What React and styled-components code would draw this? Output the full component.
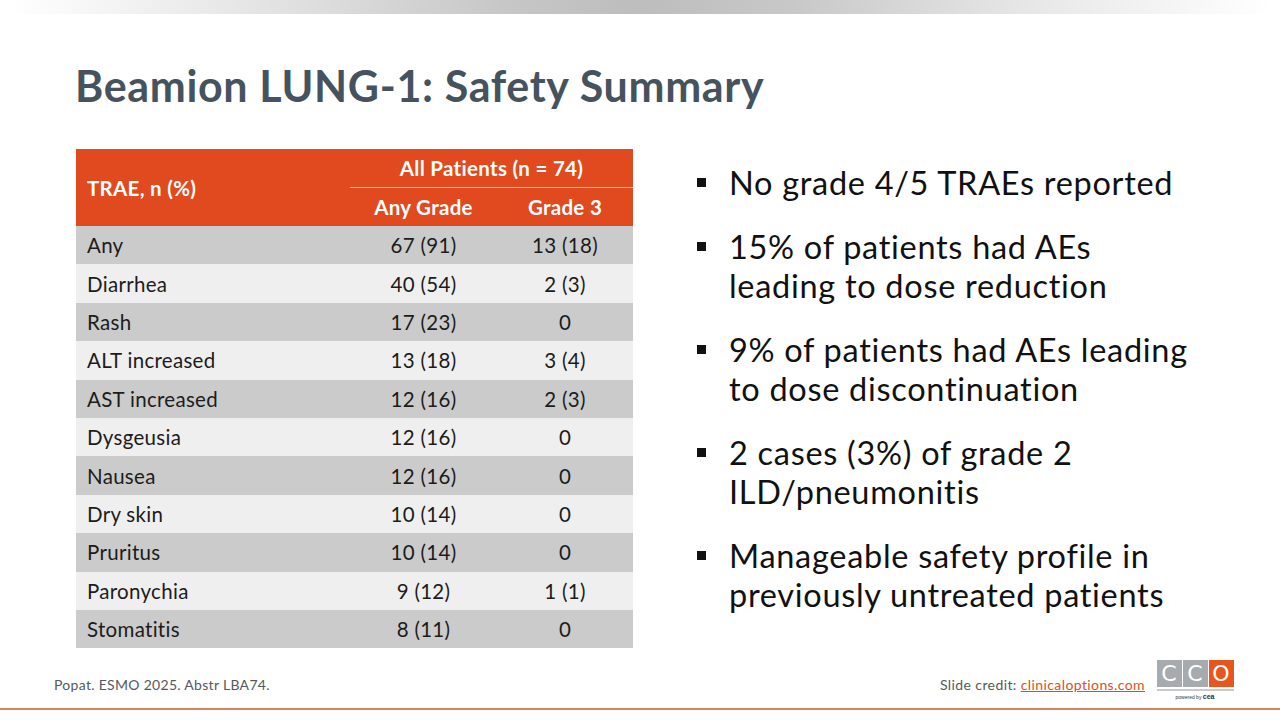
import React from "react";
import styled, { createGlobalStyle } from "styled-components";

const GlobalStyle = createGlobalStyle`
  html, body {
    margin: 0;
    padding: 0;
    background: #ffffff;
  }
  body {
    font-family: Lato, "Open Sans", sans-serif;
  }
`;

const Slide = styled.div`
  width: 1280px;
  height: 720px;
  background: #ffffff;
  display: flex;
  flex-direction: column;
  overflow: hidden;
`;

const TopBar = styled.div`
  height: 14px;
  margin: 0 8px;
  background: linear-gradient(
    90deg,
    #ffffff 0%,
    #e4e4e4 20%,
    #c6c6c6 40%,
    #bdbdbd 50%,
    #c8c8c8 62%,
    #e6e6e6 80%,
    #ffffff 100%
  );
`;

const Title = styled.h1`
  margin: 44px 0 0 75px;
  font-family: Lato, sans-serif;
  font-weight: 700;
  font-size: 43px;
  line-height: 56px;
  color: #46535e;
  letter-spacing: 0.65px;
`;

const Body = styled.div`
  display: flex;
  margin-top: 35px;
  padding-left: 76px;
  height: 500px;
`;

const Table = styled.table`
  width: 557px;
  border-collapse: collapse;
  font-family: Lato, sans-serif;
  font-size: 20.5px;
  letter-spacing: 0.3px;
  color: #1c1c1c;
  align-self: flex-start;
`;

const HeadCell = styled.th`
  background: #e04a1e;
  color: #ffffff;
  font-weight: 700;
  font-size: 20.5px;
  height: 38px;
  padding: 0;
  text-align: ${(p) => (p.$left ? "left" : "center")};
  padding-left: ${(p) => (p.$left ? "11px" : "0")};
  border-bottom: ${(p) => (p.$rule ? "1px solid #f3b9a5" : "none")};
`;

const Row = styled.tr`
  height: 38.4px;
  background: ${(p) => (p.$odd ? "#cbcbcb" : "#efefef")};
`;

const Cell = styled.td`
  padding: 0;
  padding-left: ${(p) => (p.$left ? "11px" : "0")};
  text-align: ${(p) => (p.$left ? "left" : "center")};
  width: ${(p) => p.$w || "auto"};
`;

const Bullets = styled.ul`
  list-style: none;
  margin: 14px 0 0 64px;
  padding: 0;
  display: flex;
  flex-direction: column;
  gap: 24px;
  font-family: Lato, sans-serif;
  font-size: 32.5px;
  line-height: 39.5px;
  letter-spacing: 0.7px;
  color: #111111;
`;

const Bullet = styled.li`
  position: relative;
  padding-left: 32px;
  width: 472px;

  &::before {
    content: "";
    position: absolute;
    left: 0;
    top: 15px;
    width: 9px;
    height: 9px;
    background: #111111;
  }
`;

const Footer = styled.div`
  margin-top: auto;
  height: 50px;
  display: flex;
  align-items: flex-start;
  justify-content: space-between;
  padding: 0 47px 0 54px;
  border-bottom: 2px solid #d9825f;
  margin-bottom: 10px;
`;

const Ref = styled.span`
  margin-top: 18px;
  font-family: Lato, sans-serif;
  font-size: 14px;
  letter-spacing: 0.3px;
  color: #55595e;
`;

const Credit = styled.div`
  display: flex;
  align-items: flex-start;
  gap: 12px;
`;

const CreditText = styled.span`
  margin-top: 18px;
  font-family: Lato, sans-serif;
  font-size: 14px;
  letter-spacing: 0.4px;
  color: #55595e;

  a {
    color: #d9501f;
    text-decoration: underline;
  }
`;

const Logo = styled.div`
  display: flex;
  flex-direction: column;
  align-items: center;
  width: 76px;
  margin-top: 2px;
`;

const LogoBoxes = styled.div`
  display: flex;
  gap: 1px;
  padding-bottom: 2px;
  border-bottom: 2px solid #c7c9cb;
`;

const LogoBox = styled.div`
  width: 25px;
  height: 27px;
  background: ${(p) => (p.$accent ? "#e8561f" : "#a7abae")};
  color: #ffffff;
  display: flex;
  align-items: center;
  justify-content: center;
  font-family: "DejaVu Sans", sans-serif;
  font-size: 22px;
  line-height: 1;
`;

const PoweredBy = styled.span`
  margin-top: 2px;
  font-family: "Liberation Sans", sans-serif;
  font-size: 5px;
  color: #333;

  b {
    font-size: 7px;
  }
`;

const rows = [
  ["Any", "67 (91)", "13 (18)"],
  ["Diarrhea", "40 (54)", "2 (3)"],
  ["Rash", "17 (23)", "0"],
  ["ALT increased", "13 (18)", "3 (4)"],
  ["AST increased", "12 (16)", "2 (3)"],
  ["Dysgeusia", "12 (16)", "0"],
  ["Nausea", "12 (16)", "0"],
  ["Dry skin", "10 (14)", "0"],
  ["Pruritus", "10 (14)", "0"],
  ["Paronychia", "9 (12)", "1 (1)"],
  ["Stomatitis", "8 (11)", "0"],
];

const points = [
  "No grade 4/5 TRAEs reported",
  "15% of patients had AEs leading to dose reduction",
  "9% of patients had AEs leading to dose discontinuation",
  "2 cases (3%) of grade 2 ILD/pneumonitis",
  "Manageable safety profile in previously untreated patients",
];

export default function App() {
  return (
    <Slide>
      <GlobalStyle />
      <TopBar />
      <Title>Beamion LUNG-1: Safety Summary</Title>
      <Body>
        <Table>
          <thead>
            <tr>
              <HeadCell $left rowSpan={2}>
                TRAE, n (%)
              </HeadCell>
              <HeadCell colSpan={2} $rule>
                All Patients (n = 74)
              </HeadCell>
            </tr>
            <tr>
              <HeadCell>Any Grade</HeadCell>
              <HeadCell>Grade 3</HeadCell>
            </tr>
          </thead>
          <tbody>
            {rows.map((r, i) => (
              <Row key={r[0]} $odd={i % 2 === 0}>
                <Cell $left $w="263px">
                  {r[0]}
                </Cell>
                <Cell $w="147px">{r[1]}</Cell>
                <Cell>{r[2]}</Cell>
              </Row>
            ))}
          </tbody>
        </Table>
        <Bullets>
          {points.map((p) => (
            <Bullet key={p}>{p}</Bullet>
          ))}
        </Bullets>
      </Body>
      <Footer>
        <Ref>Popat. ESMO 2025. Abstr LBA74.</Ref>
        <Credit>
          <CreditText>
            Slide credit: <a href="#">clinicaloptions.com</a>
          </CreditText>
          <Logo>
            <LogoBoxes>
              <LogoBox>C</LogoBox>
              <LogoBox>C</LogoBox>
              <LogoBox $accent>O</LogoBox>
            </LogoBoxes>
            <PoweredBy>
              powered by <b>cea</b>
            </PoweredBy>
          </Logo>
        </Credit>
      </Footer>
    </Slide>
  );
}
